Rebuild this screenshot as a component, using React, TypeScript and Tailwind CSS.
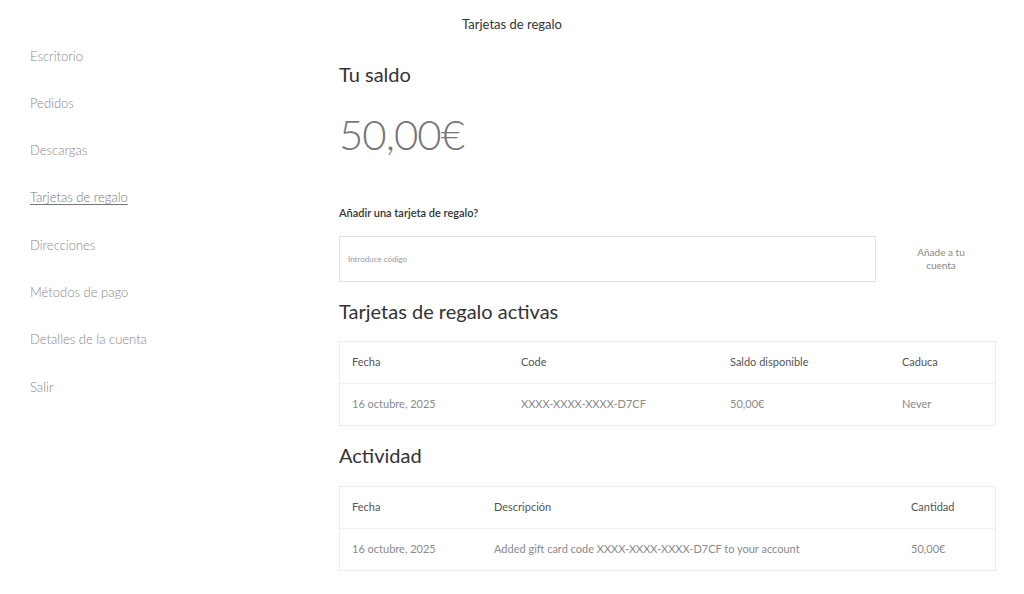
const navItems = [
  "Escritorio",
  "Pedidos",
  "Descargas",
  "Tarjetas de regalo",
  "Direcciones",
  "Métodos de pago",
  "Detalles de la cuenta",
  "Salir",
];

const font = "font-['Lato','Open_Sans',sans-serif]";

export default function App() {
  return (
    <div className={`relative h-[594px] w-[1024px] overflow-hidden bg-white ${font}`}>
      <h1 className="pt-[15px] text-center text-[13px] text-[#333]">Tarjetas de regalo</h1>

      <div className="flex">
        <nav className="w-[339px] shrink-0 pl-[30px]">
          <ul className="flex flex-col pt-[12px]">
            {navItems.map((item) => (
              <li
                key={item}
                className={`h-[47.3px] text-[13px] font-light leading-[18px] ${
                  item === "Tarjetas de regalo"
                    ? "text-[#777] underline underline-offset-2"
                    : "text-[#888]"
                }`}
              >
                {item}
              </li>
            ))}
          </ul>
        </nav>

        <main className="w-[657px] shrink-0">
          <h2 className="mt-[25px] text-[20px] leading-[28px] text-[#333]">Tu saldo</h2>
          <p className="mt-[21px] text-[42px] font-light leading-[50px] tracking-[-1px] text-[#777]">
            50,00€
          </p>

          <p className="mt-[46px] text-[11px] font-semibold text-[#333]">
            Añadir una tarjeta de regalo?
          </p>

          <div className="mt-[15px] flex items-center">
            <div className="flex h-[46px] w-[537px] shrink-0 items-center border border-[#e2e2e2] px-[8px] text-[8px] text-[#999]">
              Introduce código
            </div>
            <button
              type="button"
              className="w-[130px] shrink-0 text-center text-[10px] leading-[13px] text-[#888]"
            >
              Añade a tu
              <br />
              cuenta
            </button>
          </div>

          <h2 className="mt-[15px] text-[20px] leading-[28px] text-[#333]">
            Tarjetas de regalo activas
          </h2>

          <div className="mt-[16px] border border-[#ececec] text-[11px]">
            <div className="grid h-[42px] grid-cols-[169px_209px_172px_1fr] items-center border-b border-[#f2f2f2] pl-[12px] text-[#555]">
              <span>Fecha</span>
              <span>Code</span>
              <span>Saldo disponible</span>
              <span>Caduca</span>
            </div>
            <div className="grid h-[41px] grid-cols-[169px_209px_172px_1fr] items-center pl-[12px] text-[#8a8a8a]">
              <span>16 octubre, 2025</span>
              <span>XXXX-XXXX-XXXX-D7CF</span>
              <span>50,00€</span>
              <span>Never</span>
            </div>
          </div>

          <h2 className="mt-[15px] text-[20px] leading-[28px] text-[#333]">Actividad</h2>

          <div className="mt-[17px] border border-[#ececec] text-[11px]">
            <div className="grid h-[42px] grid-cols-[142px_417px_1fr] items-center border-b border-[#f2f2f2] pl-[12px] text-[#555]">
              <span>Fecha</span>
              <span>Descripción</span>
              <span>Cantidad</span>
            </div>
            <div className="grid h-[41px] grid-cols-[142px_417px_1fr] items-center pl-[12px] text-[#8a8a8a]">
              <span>16 octubre, 2025</span>
              <span>Added gift card code XXXX-XXXX-XXXX-D7CF to your account</span>
              <span>50,00€</span>
            </div>
          </div>
        </main>
      </div>
    </div>
  );
}
